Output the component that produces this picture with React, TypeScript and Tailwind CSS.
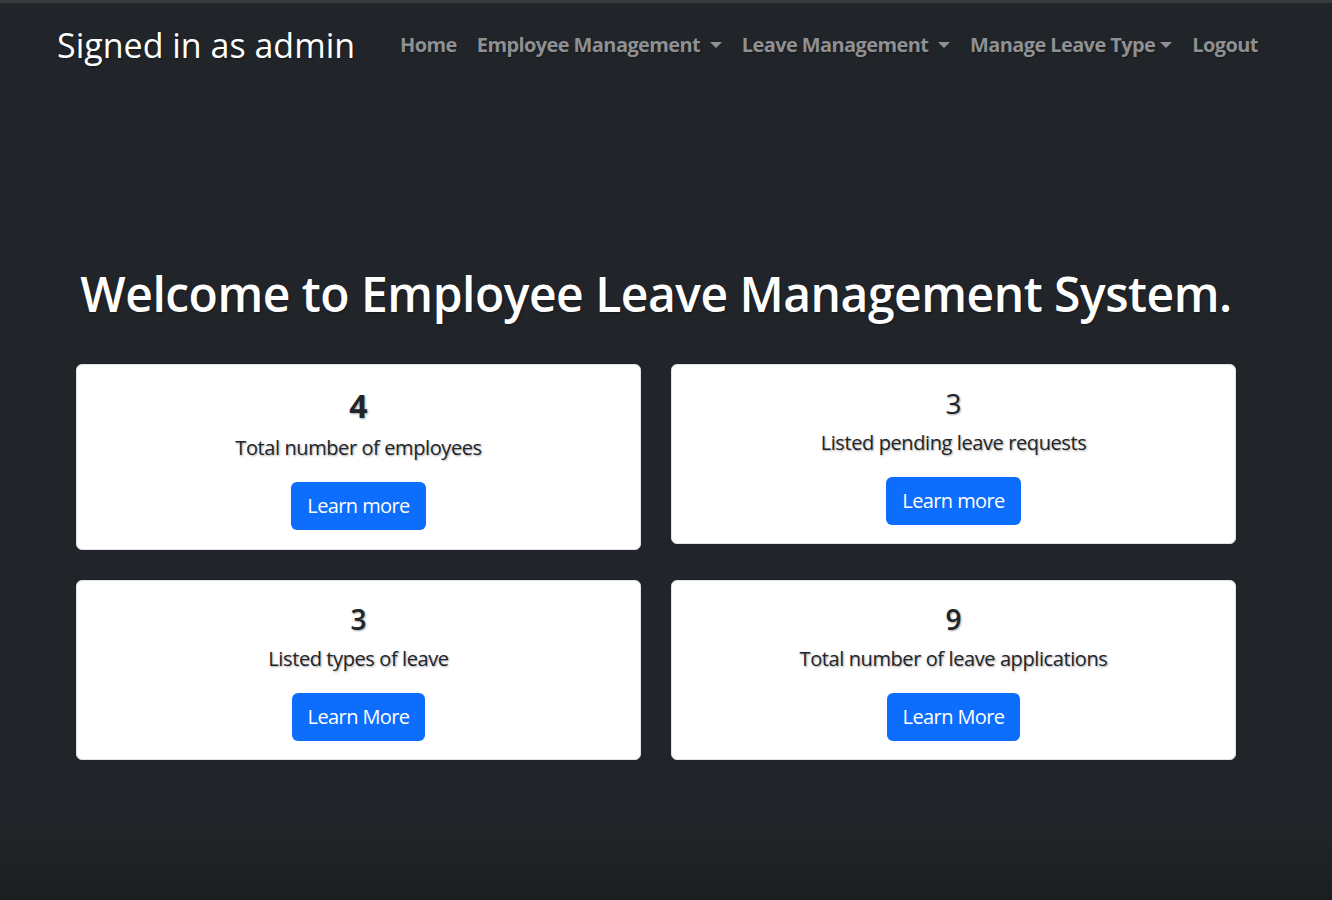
const navLinks = [
  { label: "Home", dropdown: false, space: false },
  { label: "Employee Management", dropdown: true, space: true },
  { label: "Leave Management", dropdown: true, space: true },
  { label: "Manage Leave Type", dropdown: true, space: false },
  { label: "Logout", dropdown: false, space: false },
]

const stats = [
  { value: "4", label: "Total number of employees", action: "Learn more", weight: "bold" },
  { value: "3", label: "Listed pending leave requests", action: "Learn more", weight: "normal" },
  { value: "3", label: "Listed types of leave", action: "Learn More", weight: "semibold" },
  { value: "9", label: "Total number of leave applications", action: "Learn More", weight: "semibold" },
]

function Caret() {
  return (
    <span className="inline-block w-0 h-0 border-x-[6px] border-t-[6px] border-x-transparent border-t-current align-middle" />
  )
}

export default function App() {
  return (
    <div className="min-h-[900px] flex flex-col bg-[#212529] font-['Open_Sans',sans-serif] [text-shadow:1px_1px_2px_rgba(0,0,0,0.35)]">
      {/* thin top edge */}
      <div className="h-[3px] bg-[#3a3b3d]" />

      {/* Navbar */}
      <nav className="flex items-center h-[84px] pl-[57px]">
        <a className="text-[34px] text-white mr-[35px] whitespace-nowrap">Signed in as admin</a>
        <ul className="flex items-center">
          {navLinks.map((link) => (
            <li key={link.label}>
              <a className="flex items-center px-[10px] text-[20px] font-bold text-[#8e9093] tracking-[-0.6px] whitespace-pre">
                {link.label}
                {link.space ? " " : ""}
                {link.dropdown && (
                  <span className="ml-[5px] flex items-center">
                    <Caret />
                  </span>
                )}
              </a>
            </li>
          ))}
        </ul>
      </nav>

      {/* Main */}
      <main className="w-[1160px] ml-[76px] pt-[178px]">
        <h1 className="text-center text-white text-[48px] font-semibold tracking-[-0.5px] leading-[1.2] whitespace-nowrap">
          Welcome to Employee Leave Management System.
        </h1>

        <div className="grid grid-cols-2 gap-x-[30px] gap-y-[30px] mt-[41px] items-start">
          {stats.map((s, i) => (
            <div
              key={i}
              className={`bg-white rounded-[6px] border border-[#dee2e6] flex flex-col items-center text-[#212529] ${s.weight === "bold" ? "h-[186px]" : "h-[180px]"}`}
            >
              {s.weight === "bold" ? (
                <h2 className="text-[32px] font-bold leading-[38px] mt-[22px]">{s.value}</h2>
              ) : (
                <h3
                  className={`text-[28px] leading-[34px] mt-[21px] ${s.weight === "semibold" ? "font-semibold" : "font-normal"}`}
                >
                  {s.value}
                </h3>
              )}
              <p className="text-[20px] leading-[30px] mt-[8px] tracking-[-0.4px]">{s.label}</p>
              <button className="mt-[19px] h-[48px] px-[16px] rounded-[6px] bg-[#0d6efd] text-white text-[20px] tracking-[-0.6px]">
                {s.action}
              </button>
            </div>
          ))}
        </div>
      </main>

      <div className="flex-1 bg-gradient-to-b from-[#212529] via-[#212529] to-[#1b1e21]" />
    </div>
  )
}
